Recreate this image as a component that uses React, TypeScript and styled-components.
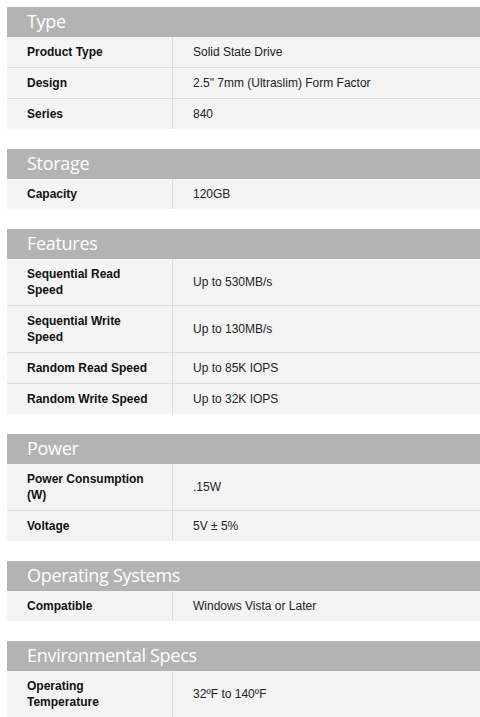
import React from "react";
import styled, { createGlobalStyle } from "styled-components";

const Global = createGlobalStyle`
  html, body { margin: 0; padding: 0; background: #fff; }
  body { padding: 7px 0 0 7px; font-family: "Liberation Sans", Arial, sans-serif; }
`;

const Page = styled.div`
  display: flex;
  flex-direction: column;
  gap: 20px;
`;

const Section = styled.section`
  display: flex;
  flex-direction: column;
`;

const Header = styled.h2`
  margin: 0;
  height: 30px;
  background: #b3b3b3;
  color: #fff;
  font-family: "Open Sans", "Segoe UI", sans-serif;
  font-weight: 400;
  font-size: 18px;
  line-height: 29px;
  padding-left: 20px;
  letter-spacing: -0.3px;
`;

const Row = styled.div`
  display: grid;
  grid-template-columns: 166px 1fr;
  background: #f4f4f4;
  & + & { border-top: 1px solid #dcdcdc; }
`;

const Label = styled.div`
  padding: 7px 20px;
  font-size: 12px;
  line-height: 16px;
  font-weight: 700;
  color: #111;
  border-right: 1px solid #dcdcdc;
  display: flex;
  align-items: center;
`;

const Value = styled.div`
  padding: 7px 20px;
  font-size: 12px;
  line-height: 16px;
  color: #222;
  display: flex;
  align-items: center;
`;

const data: [string, [string, string][]][] = [
  ["Type", [
    ["Product Type", "Solid State Drive"],
    ["Design", "2.5\" 7mm (Ultraslim) Form Factor"],
    ["Series", "840"],
  ]],
  ["Storage", [["Capacity", "120GB"]]],
  ["Features", [
    ["Sequential Read Speed", "Up to 530MB/s"],
    ["Sequential Write Speed", "Up to 130MB/s"],
    ["Random Read Speed", "Up to 85K IOPS"],
    ["Random Write Speed", "Up to 32K IOPS"],
  ]],
  ["Power", [
    ["Power Consumption (W)", ".15W"],
    ["Voltage", "5V ± 5%"],
  ]],
  ["Operating Systems", [["Compatible", "Windows Vista or Later"]]],
  ["Environmental Specs", [["Operating Temperature", "32ºF to 140ºF"]]],
];

export default function App() {
  return (
    <>
      <Global />
      <Page>
        {data.map(([title, rows]) => (
          <Section key={title}>
            <Header>{title}</Header>
            {rows.map(([k, v]) => (
              <Row key={k}>
                <Label>{k}</Label>
                <Value>{v}</Value>
              </Row>
            ))}
          </Section>
        ))}
      </Page>
    </>
  );
}
